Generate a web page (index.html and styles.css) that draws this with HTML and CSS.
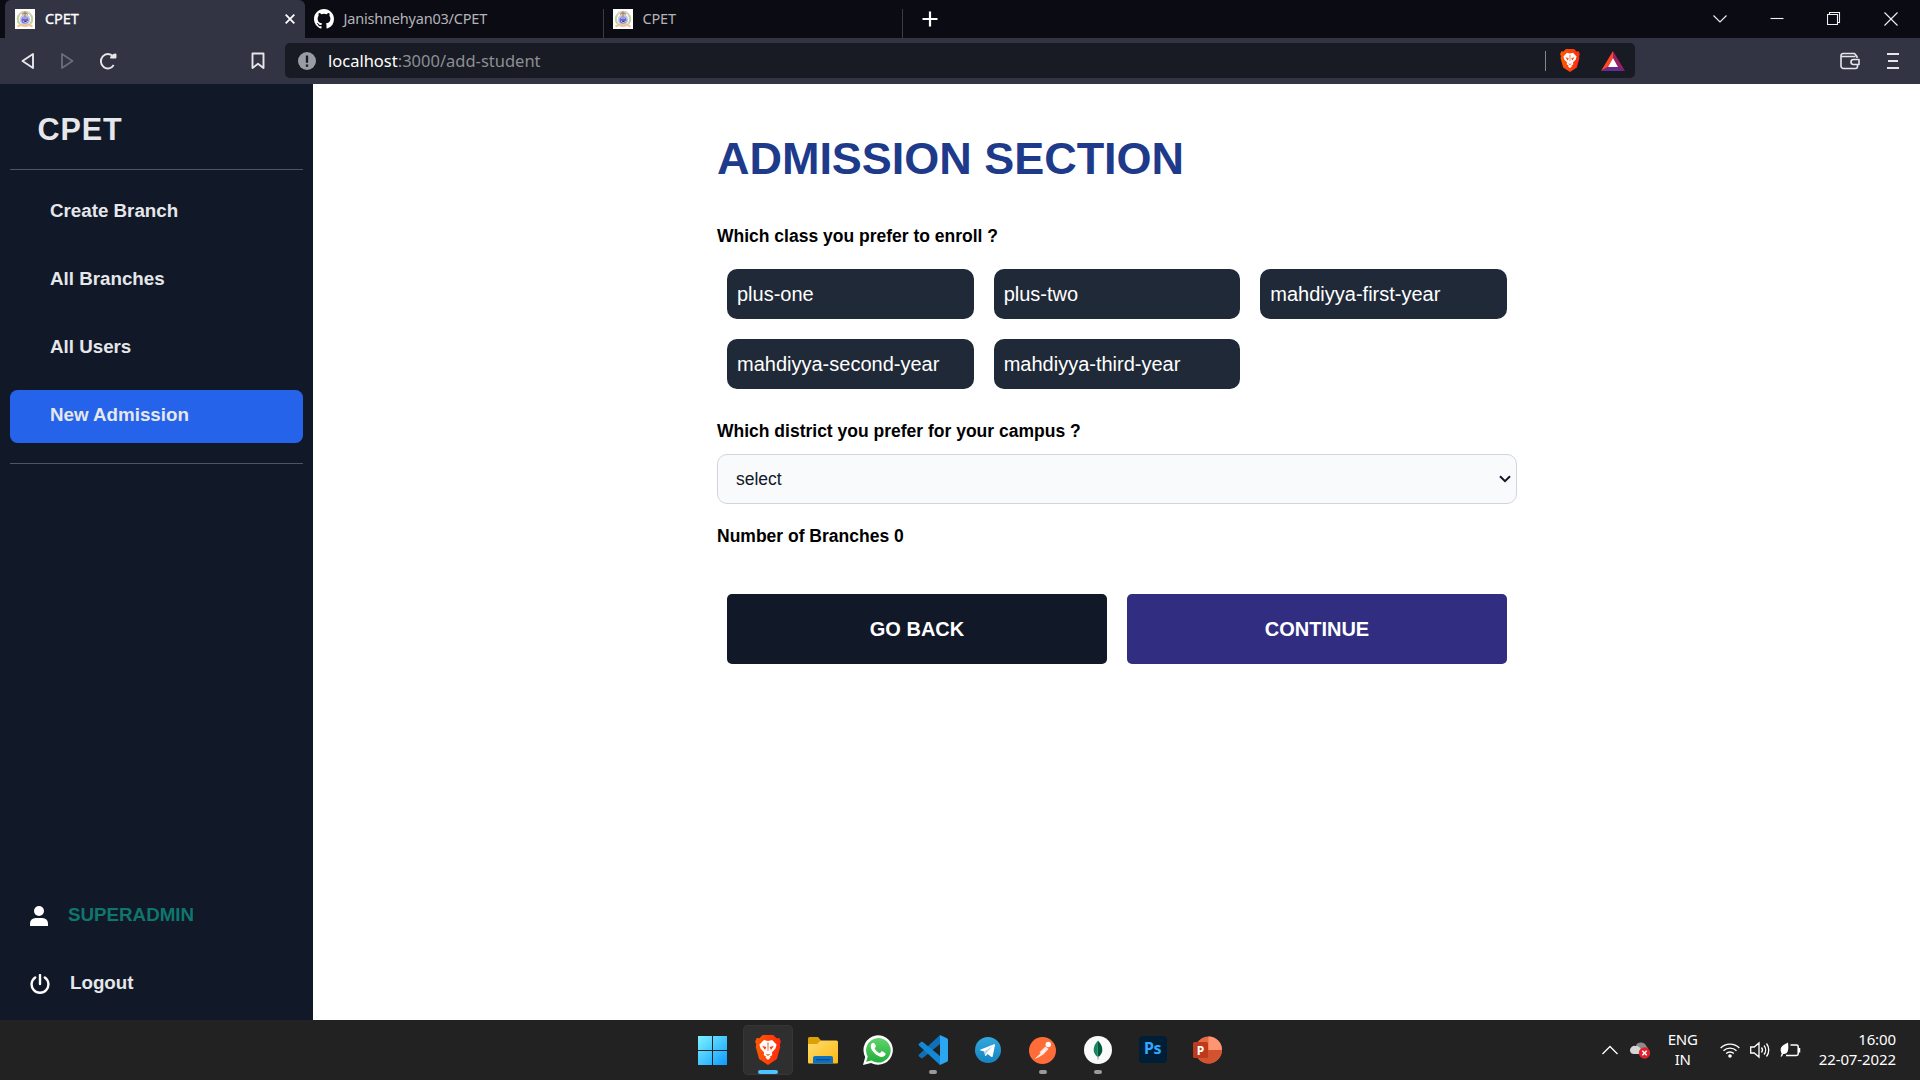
FILE: index.html
```html
<!DOCTYPE html>
<html lang="en">
<head>
<meta charset="utf-8">
<title>CPET</title>
<link rel="stylesheet" href="styles.css">
</head>
<body>
<svg class="defs" width="0" height="0" aria-hidden="true">
  <defs>
    <linearGradient id="brave-fill" x1="0" x2="1"><stop offset="0" stop-color="#ff5a00"/><stop offset="1" stop-color="#ff2a10"/></linearGradient>
    <linearGradient id="win-fill" x1="0" y1="0" x2="29" y2="29" gradientUnits="userSpaceOnUse"><stop offset="0" stop-color="#7df3ff"/><stop offset="1" stop-color="#0c9bff"/></linearGradient>
    <linearGradient id="folder-fill" x1="0" y1="0" x2="1" y2="1"><stop offset="0" stop-color="#ffdc6e"/><stop offset="1" stop-color="#fbb911"/></linearGradient>
    <linearGradient id="wa-fill" x1="0" y1="0" x2="0" y2="1"><stop offset="0" stop-color="#5fd36c"/><stop offset="1" stop-color="#22ae3b"/></linearGradient>
    <linearGradient id="tg-fill" x1="0" y1="0" x2="0" y2="1"><stop offset="0" stop-color="#34a8dd"/><stop offset="1" stop-color="#1583c0"/></linearGradient>
    <symbol id="crest" viewBox="0 0 20 20">
      <rect width="20" height="20" fill="#fff"/>
      <circle cx="10" cy="10" r="7.3" fill="none" stroke="#d8ccb4" stroke-width="2"/>
      <path d="M4 14A7 7 0 0 1 4.500 6M16 14A7 7 0 0 0 15.500 6" fill="none" stroke="#b9d890" stroke-width="1.600"/>
      <circle cx="10" cy="10.500" r="5.300" fill="#c3c6f1"/>
      <circle cx="10" cy="11" r="3.500" fill="#6668d6"/>
      <path d="M7.500 9h5M8 12l2 1.500 3-1" stroke="#e8d5d0" stroke-width="1"/>
      <path d="M10 2.500v5M7 5.500l3-2 3 2" stroke="#a8875c" stroke-width="1.200" fill="none"/>
      <path d="M2.500 17.500l4-2 3.500 1 3.500-1 4 2" stroke="#edc495" stroke-width="2" fill="none"/>
    </symbol>
    <symbol id="lion" viewBox="0 0 24 28">
      <path d="M7 0h10l3 3 2.500-.3L24 6l-1 3 .5 2-3.200 11.500L12 28l-8.300-5.500L.5 11 1 9 0 6l1.500-3.300L4 3z" fill="url(#brave-fill)"/>
      <path d="M8.200 4.700 12 5.500l3.800-.8 3 3.100 1.200 1.400-1 3.500-3.400 3.600.4 2.300-2.300 1.700-1.700 1.600-1.700-1.600L8 18.600l.4-2.300L5 12.700 4 9.200l1.200-1.400zM9.500 21l2.500-1.200 2.500 1.200-2.500 2.300z" fill="#fff"/>
      <path d="M6.500 10l4 1.200L9.200 14zM17.500 10l-4 1.200 1.300 2.800zM9.500 17.200l2.500 1 2.500-1-2.500 2.400zM11.500 7h1l-.2 8h-.6z" fill="#fa4213"/>
    </symbol>
  </defs>
</svg>

<header class="browser">
  <div class="tabs">
    <div class="tab tab-active">
      <svg class="favicon"><use href="#crest"/></svg>
      <span class="tab-title">CPET</span>
      <svg class="tab-close" viewBox="0 0 10 10"><path d="M.7.7l8.600 8.600M9.300.7L.7 9.300"/></svg>
    </div>
    <div class="tab tab-github">
      <svg class="favicon" viewBox="0 0 16 16"><path fill="#fff" d="M8 0C3.580 0 0 3.580 0 8c0 3.540 2.290 6.530 5.470 7.590.4.070.55-.17.55-.38 0-.19-.01-.82-.01-1.490-2.010.37-2.530-.49-2.690-.94-.09-.23-.48-.94-.82-1.130-.28-.15-.68-.52-.01-.53.63-.01 1.080.58 1.230.82.72 1.210 1.870.87 2.330.66.07-.52.28-.87.51-1.070-1.780-.2-3.640-.89-3.640-3.950 0-.87.31-1.590.82-2.150-.08-.2-.36-1.020.08-2.120 0 0 .67-.21 2.200.82a7.600 7.600 0 0 1 4 0c1.530-1.040 2.200-.82 2.200-.82.44 1.100.16 1.920.08 2.120.51.56.82 1.270.82 2.150 0 3.070-1.870 3.750-3.650 3.950.29.25.54.73.54 1.480 0 1.070-.01 1.930-.01 2.200 0 .21.15.46.55.38A8 8 0 0 0 16 8c0-4.420-3.580-8-8-8z"/></svg>
      <span class="tab-title">Janishnehyan03/CPET</span>
    </div>
    <div class="tab tab-second">
      <svg class="favicon"><use href="#crest"/></svg>
      <span class="tab-title">CPET</span>
    </div>
    <svg class="new-tab" viewBox="0 0 16 16"><path d="M8 .5v15M.5 8h15"/></svg>
    <div class="window-controls">
      <svg width="14" height="14" viewBox="0 0 14 14"><path d="M.5 3.500 7 10l6.500-6.500"/></svg>
      <svg width="14" height="14" viewBox="0 0 14 14"><path d="M.5 6.500h13"/></svg>
      <svg width="14" height="14" viewBox="0 0 14 14"><path d="M.5 2.500h10v10H.5zM2.500 2.500v-2h10v10h-2"/></svg>
      <svg width="14" height="14" viewBox="0 0 14 14"><path d="M.5.5l13 13M13.500.5l-13 13"/></svg>
    </div>
  </div>
  <div class="toolbar">
    <div class="nav-icons">
      <svg width="14" height="18" viewBox="0 0 14 18"><path d="M12 2v14L1.500 9z"/></svg>
      <svg class="dim" width="14" height="18" viewBox="0 0 14 18"><path d="M2 2v14l10.500-7z"/></svg>
      <svg width="18" height="18" viewBox="0 0 18 18"><path d="M14 4.500A6.900 7.200 0 1 0 14.700 13"/><path d="M12 5.500h4.500V2.500l-2 .5z" fill="#e6e6ea"/></svg>
    </div>
    <svg class="bookmark" width="14" height="18" viewBox="0 0 14 18"><path d="M1.500 1.500h11v14.500L7 11.800 1.500 16z"/></svg>
    <div class="address">
      <svg class="info" viewBox="0 0 18 18"><circle cx="9" cy="9" r="9" fill="#9a9ca5"/><path d="M9 3.500v7.200M9 12.500v2.300" stroke="#181b23" stroke-width="2.300"/></svg>
      <span class="url"><b>localhost</b>:3000/add-student</span>
      <i class="address-rule"></i>
      <svg class="shield" width="20" height="23"><use href="#lion"/></svg>
      <svg class="bat" width="24" height="20" viewBox="0 0 24 20"><path d="M12 0 0 20l7-4 5-9z" fill="#ff4724"/><path d="M12 0v7l5 9 7 4z" fill="#9e1f63"/><path d="M0 20h24l-7-4H7z" fill="#662d91"/><path d="M12 7l5 9H7z" fill="#fff"/></svg>
    </div>
    <svg class="wallet" width="20" height="18" viewBox="0 0 20 18"><path d="M17 6V4.500L14.500 1.500H3a2 2 0 0 0-2 2V14a2.500 2.500 0 0 0 2.500 2.500h12A2 2 0 0 0 17.500 14.500V13M1.500 4.500h14M19 7.500h-5.500a2.500 2.500 0 0 0 0 5H19z"/></svg>
    <svg class="menu" width="12" height="18" viewBox="0 0 12 18"><path d="M0 2h12M1 9h10M0 16h12"/></svg>
  </div>
</header>

<div class="app">
  <aside class="sidebar">
    <h2 class="brand">CPET</h2>
    <nav class="links">
      <a class="link">Create Branch</a>
      <a class="link">All Branches</a>
      <a class="link">All Users</a>
      <a class="link link-active">New Admission</a>
    </nav>
    <div class="account">
      <div class="account-row">
        <svg width="18" height="20" viewBox="0 0 18 20"><circle cx="9" cy="5" r="5" fill="#fff"/><path d="M0 20v-2.500A5.500 5.500 0 0 1 5.500 12h7a5.500 5.500 0 0 1 5.500 5.500V20z" fill="#fff"/></svg>
        <span class="role">SUPERADMIN</span>
      </div>
      <div class="account-row">
        <svg width="20" height="20" viewBox="0 0 20 20"><path d="M5.200 3.500a8.400 8.400 0 1 0 9.600 0M10 1v9" fill="none" stroke="#fff" stroke-width="2.400" stroke-linecap="round"/></svg>
        <span class="logout">Logout</span>
      </div>
    </div>
  </aside>
  <main class="content">
    <div class="form">
      <h1 class="title">ADMISSION SECTION</h1>
      <p class="label label-class">Which class you prefer to enroll ?</p>
      <div class="classes">
        <div class="class-card">plus-one</div>
        <div class="class-card">plus-two</div>
        <div class="class-card">mahdiyya-first-year</div>
        <div class="class-card">mahdiyya-second-year</div>
        <div class="class-card">mahdiyya-third-year</div>
      </div>
      <p class="label label-district">Which district you prefer for your campus ?</p>
      <div class="select">
        <span>select</span>
        <svg width="12" height="8" viewBox="0 0 12 8"><path d="M1 1.200l5 5 5-5" fill="none" stroke="#111827" stroke-width="2"/></svg>
      </div>
      <p class="label label-count">Number of Branches 0</p>
      <div class="actions">
        <button class="button back">GO BACK</button>
        <button class="button next">CONTINUE</button>
      </div>
    </div>
  </main>
</div>

<footer class="taskbar">
  <div class="apps">
    <div class="app-icon"><svg width="29" height="29" viewBox="0 0 29 29"><path d="M0 0h14v14H0zM15 0h14v14H15zM0 15h14v14H0zM15 15h14v14H15z" fill="url(#win-fill)"/></svg></div>
    <div class="app-icon focused"><svg width="26" height="30"><use href="#lion"/></svg></div>
    <div class="app-icon"><svg width="30" height="30" viewBox="0 0 30 30"><path d="M0 12V3.500A1.500 1.500 0 0 1 1.500 2H10l3 3.500V12z" fill="#dda006"/><path d="M0 9h9l4-3.500h15.500A1.500 1.500 0 0 1 30 7v20.500a1 1 0 0 1-1 1H1a1 1 0 0 1-1-1z" fill="url(#folder-fill)"/><path d="M5 28.500V23a2 2 0 0 1 2-2h16a2 2 0 0 1 2 2v5.500z" fill="#0d70c2"/><path d="M8 24.700h14" stroke="#064d90" stroke-width="1.300"/></svg></div>
    <div class="app-icon"><svg width="30" height="30" viewBox="0 0 30 30"><path d="M0 30l2.200-8A14.700 14.700 0 1 1 8 27.900z" fill="#fff"/><path d="M3.200 26.800l1.500-5.400A12.300 12.300 0 1 1 8.500 25.500z" fill="url(#wa-fill)"/><path d="M10.200 7.800c-1 0-2.500 1.200-2.500 3.500 0 4.200 6.600 10.700 11.200 10.700 2.400 0 3.800-1.700 3.800-3.400 0-.6-3.300-2.500-4-2.400-.7.100-1.300 2-2 1.900-1.600-.3-4.600-3.200-5-4.800-.1-.6 1.300-1.300 1.200-2.100-.2-.9-1.200-3.400-2.700-3.400z" fill="#fff"/></svg></div>
    <div class="app-icon running"><svg width="30" height="30" viewBox="0 0 30 30"><path d="M22 0 1 19.500c-.6.600-.6 1.200 0 1.800L3 23c.6.400 1.200.4 1.800 0L22 9z" fill="#0f6fb8"/><path d="M22 30 1 10.500C.4 10 .4 9.300 1 8.700L3 7c.6-.4 1.200-.4 1.800 0L22 21z" fill="#1489d3"/><path d="M22 0l7 3.200a2 2 0 0 1 1 1.800v20a2 2 0 0 1-1 1.800L22 30z" fill="#2ba6f1"/></svg></div>
    <div class="app-icon"><svg width="26" height="26" viewBox="0 0 26 26"><circle cx="13" cy="13" r="13" fill="url(#tg-fill)"/><path d="M5 12.700 19 7.200c.7-.2 1.200.1 1 1l-2.300 11c-.2.900-.8 1-1.500.6l-3.600-2.700-1.800 1.800c-.4.400-.7.200-.8-.3l-.8-4.100-4.100-1.300c-.6-.2-.6-.3-.1-.5z" fill="#fff"/><path d="M9.200 14.500l8.300-5.300-6.300 6.700-.4 3z" fill="#b5d5e8"/></svg></div>
    <div class="app-icon running"><svg width="27" height="27" viewBox="0 0 27 27"><circle cx="13.500" cy="13.500" r="13.500" fill="#ff6c37"/><circle cx="19.300" cy="7.500" r="2.700" fill="#fff"/><path d="M16.500 9.500l3 2.500-5.200 5.500-6.800 4 4.500-5.300-1.600-.9z" fill="#ffe7de"/><path d="M6.500 21.500l9-8" stroke="#fff"/></svg></div>
    <div class="app-icon running"><svg width="28" height="28" viewBox="0 0 28 28"><circle cx="14" cy="14" r="14" fill="#fafafa"/><path d="M14 4.500C7.800 11 8.800 17.500 13.500 21z" fill="#12885c"/><path d="M14 4.500C20.200 11 19.200 17.500 14.500 21H13.500z" fill="#00583e"/><path d="M14 20v3.500" stroke="#92ada2" stroke-width="1.200"/></svg></div>
    <div class="app-icon"><span class="ps">Ps</span></div>
    <div class="app-icon"><svg width="30" height="28" viewBox="0 0 30 28"><circle cx="15.500" cy="14" r="13.500" fill="#e56b47"/><path d="M15.500.5A13.500 13.500 0 0 1 29 14H15.500z" fill="#ff9673"/><path d="M29 14a13.500 13.500 0 0 1-25 7l11.500-7z" fill="#d35230"/><rect x="0" y="6" width="15" height="16" rx="1.500" fill="#bd3a1b"/><text class="ppt-letter" x="7.500" y="18.500" text-anchor="middle">P</text></svg></div>
  </div>
  <div class="tray">
    <svg width="16" height="10" viewBox="0 0 16 10"><path d="M.5 9 8 1.500 15.500 9" fill="none" stroke="#fff" stroke-width="1.300"/></svg>
    <svg class="cloud" width="21" height="18" viewBox="0 0 21 18"><path d="M6 4a6 6 0 0 1 10.500 1.500A5 5 0 0 1 17 13H8z" fill="#8c8c8c"/><path d="M0 9.500A4.500 4.500 0 0 1 6 5c3 0 4 2 6 4v4H4A4 4 0 0 1 0 9.500z" fill="#d5d5d5"/><circle cx="14.500" cy="12" r="5.700" fill="#e0202c"/><path d="M12.300 9.800l4.400 4.400M16.700 9.800l-4.400 4.400" stroke="#fff" stroke-width="1.500"/></svg>
    <div class="language">ENG<br>IN</div>
    <svg class="wifi" width="20" height="16" viewBox="0 0 20 16"><g fill="none" stroke="#fff" stroke-width="1.400"><path d="M.7 6a13 13 0 0 1 18.600 0M3.500 8.800a9.200 9.200 0 0 1 13 0M6.200 11.600a5.400 5.400 0 0 1 7.600 0"/></g><circle cx="10" cy="14" r="1.800" fill="#fff"/></svg>
    <svg class="volume" width="20" height="18" viewBox="0 0 20 18"><g fill="none" stroke="#fff" stroke-width="1.300"><path d="M.7 6v6h3.500L9 16V2L4.200 6zM11.500 6.500a4 4 0 0 1 0 5M14 4.500a7 7 0 0 1 0 9M16.500 2.500a10.500 10.500 0 0 1 0 13"/></g></svg>
    <svg class="battery" width="21" height="18" viewBox="0 0 21 18"><path d="M10.500 4h6A1.700 1.700 0 0 1 18.200 5.700v7a1.700 1.700 0 0 1-1.700 1.700H6M19.500 7v4.500" fill="none" stroke="#fff" stroke-width="1.500"/><path d="M8 1.500C6.500 3 0 4 .7 9.500c.2 2 1 3 1 3L.5 15.500h1.500l1.200-2.500c5 .3 5.700-4 4.800-11.500z" fill="#fff"/></svg>
    <div class="clock">16:00<br>22-07-2022</div>
  </div>
</footer>
</body>
</html>
```

FILE: styles.css
```css
* { box-sizing: border-box; }

body {
  margin: 0;
  width: 1920px;
  height: 1080px;
  overflow: hidden;
  display: flex;
  flex-direction: column;
  background: #fff;
  font-family: "Liberation Sans", Arial, sans-serif;
}

h1, h2, p { margin: 0; }
svg { display: block; flex: none; }
.defs { position: absolute; }

/* Browser window frame */
.browser { height: 84px; flex: none; font-family: "Noto Sans", sans-serif; }
.tabs { height: 38px; display: flex; align-items: center; padding-left: 5px; background: #0b0b14; }
.tab { height: 38px; display: flex; align-items: center; flex: none; color: #b4b4b8; }
.tab-active { width: 300px; padding: 0 10px; border-radius: 6px 6px 0 0; background: #323443; color: #fff; }
.favicon { width: 20px; height: 20px; margin-right: 9.500px; }
.tab-title { padding-bottom: 2px; font-size: 14.500px; line-height: 20px; letter-spacing: -0.200px; white-space: nowrap; }
.tab-active .favicon { margin-right: 10px; }
.tab-active .tab-title { letter-spacing: -0.100px; -webkit-text-stroke: 0.300px #fff; }
.tab-close { width: 10px; height: 10px; margin-left: auto; fill: none; stroke: #fff; stroke-width: 1.800; }
.tab-github { width: 299px; padding-left: 9px; }
.tab-second { width: 299px; padding-left: 9px; }
.tab-github::after, .tab-second::after { content: ""; width: 1px; height: 29px; margin-left: auto; align-self: flex-end; background: #3b3b42; }
.new-tab { width: 16px; height: 16px; margin-left: 19px; stroke: #fff; stroke-width: 2.200; }
.window-controls { display: flex; gap: 43px; margin-left: auto; margin-right: 22px; }
.window-controls svg { fill: none; stroke: #f1f1f4; stroke-width: 1.100; }

.toolbar { height: 46px; display: flex; align-items: center; padding: 0 21px 1px 21px; background: #323443; }
.nav-icons { display: flex; gap: 25px; }
.nav-icons svg, .bookmark, .wallet, .menu { fill: none; stroke: #e6e6ea; stroke-width: 1.900; stroke-linejoin: round; }
.nav-icons .dim { stroke: #696b77; }
.bookmark { margin-left: 134px; }
.address { width: 1350px; height: 35px; margin-left: 20px; padding: 0 10px 0 13px; display: flex; align-items: center; border-radius: 5px; background: #181b23; }
.info { width: 18px; height: 18px; }
.url { margin-left: 12px; font-size: 16.500px; line-height: 24px; color: #8c8e95; white-space: nowrap; }
.url b { font-weight: 400; color: #fff; }
.address-rule { width: 1px; height: 20px; margin-left: auto; background: #85868c; }
.shield { margin-left: 14px; }
.bat { margin-left: 21px; }
.wallet { margin-left: auto; stroke-width: 1.600; }
.menu { margin-left: 27px; }

/* Admin page */
.app { height: 936px; flex: none; display: flex; }
.sidebar { width: 313px; padding: 0 10px; display: flex; flex-direction: column; background: #111827; color: #e5e7eb; }
.brand { height: 86px; padding: 27px 0 0 27.500px; border-bottom: 1px solid #4b5563; font-size: 30.500px; line-height: 36px; letter-spacing: 0.900px; }
.links { display: flex; flex-direction: column; gap: 15px; padding: 16px 0 20px; border-bottom: 1px solid #4b5563; }
.link { height: 53px; padding: 0 40px 4px; display: flex; align-items: center; border-radius: 7.500px; font-size: 18.750px; font-weight: 700; }
.link-active { background: #2563eb; }
.account { margin-top: auto; padding: 0 20px 24px; display: flex; flex-direction: column; gap: 44px; }
.account-row { height: 24px; display: flex; align-items: center; gap: 20px; font-size: 18.750px; line-height: 24px; font-weight: 700; }
.account-row span { padding-bottom: 2px; }
.role { color: #0f766e; }

.content { flex: 1; display: flex; justify-content: center; padding-top: 50px; background: #fff; }
.form { width: 800px; margin-left: 1px; }
.title { font-size: 45px; line-height: 50px; letter-spacing: -0.030px; color: #1e3a8a; }
.label { font-size: 17.500px; line-height: 24px; font-weight: 700; color: #000; }
.label-class { margin-top: 40px; }
.classes { display: grid; grid-template-columns: repeat(3, 1fr); gap: 20px; padding: 0 10px; margin-top: 21px; }
.class-card { height: 50px; padding-left: 10px; border-radius: 10px; background: #1f2937; color: #fff; font-size: 20px; line-height: 50px; }
.label-district { margin-top: 30px; }
.select { height: 50px; margin-top: 11px; padding: 0 5px 0 18px; display: flex; align-items: center; justify-content: space-between; border: 1px solid #d1d5db; border-radius: 10px; background: #f9fafb; color: #111827; font-size: 17.500px; line-height: 24px; }
.label-count { margin-top: 20px; }
.actions { display: grid; grid-template-columns: 1fr 1fr; gap: 20px; padding: 0 10px; margin-top: 46px; }
.button { height: 70px; padding: 0; border: 0; border-radius: 5px; color: #fff; font: 700 20px/24px "Liberation Sans", Arial, sans-serif; }
.back { background: #111827; }
.next { background: #312e81; }

/* Desktop taskbar */
.taskbar { height: 60px; flex: none; display: flex; align-items: flex-start; padding: 5px 24px 0 687.500px; background: #222; color: #fff; font: 15px/20px "Noto Sans", sans-serif; }
.apps { display: flex; gap: 5px; }
.app-icon { position: relative; width: 50px; height: 50px; display: flex; align-items: center; justify-content: center; border-radius: 5px; }
.focused { background: #2f2f2f; box-shadow: inset 0 0 0 1px #363636; }
.focused::after, .running::after { content: ""; position: absolute; left: 21px; bottom: 1px; width: 8px; height: 4px; border-radius: 2px; background: #9a9a9a; }
.focused::after { left: 15px; width: 20px; background: #4cc2ff; }
.ps { width: 28px; height: 27px; margin-bottom: 2px; border-radius: 4px; background: #001e36; color: #31a8ff; font: 700 16px/25px "Noto Sans", sans-serif; text-align: center; letter-spacing: -0.500px; }
.ppt-letter { font: 700 12px "Noto Sans", sans-serif; fill: #fff; }
.tray { height: 50px; display: flex; align-items: center; margin-left: auto; }
.cloud { margin-left: 12px; }
.language { width: 30px; margin-left: 17px; padding-bottom: 2px; text-align: center; letter-spacing: -0.200px; }
.wifi { margin-left: 22px; }
.volume { margin-left: 10px; }
.battery { margin-left: 10px; }
.clock { margin-left: 18px; padding-bottom: 2px; text-align: right; letter-spacing: -0.100px; white-space: nowrap; }
```
